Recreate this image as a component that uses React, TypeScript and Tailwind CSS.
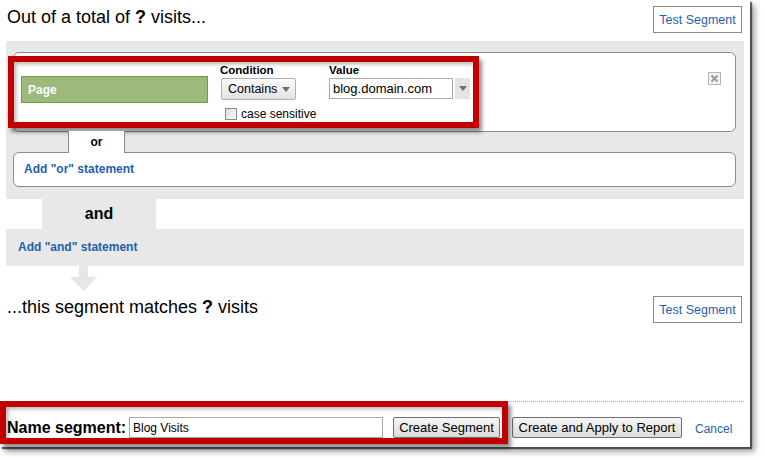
import React from 'react';

function Caret({ className = '' }: { className?: string }) {
  return (
    <svg width="8" height="5" viewBox="0 0 8 5" className={className}>
      <polygon points="0,0 8,0 4,5" fill="#707070" />
    </svg>
  );
}

function TestSegment() {
  return (
    <button className="h-[27px] w-[89px] border border-[#8a8a8a] bg-white pt-[1px] text-[12.5px] leading-none text-[#1f5fae]">
      Test Segment
    </button>
  );
}

export default function App() {
  return (
    <div className="h-[460px] w-[765px] overflow-hidden bg-white font-['Liberation_Sans',Arial,sans-serif] text-black">
      <div className="relative flex h-[447px] w-[750px] flex-col bg-white shadow-[2px_2px_1px_rgba(0,0,0,0.55),5px_5px_6px_rgba(0,0,0,0.35)]">
        {/* header */}
        <div className="flex h-[41px] items-start justify-between pl-[7px] pr-[8px] pt-[6px]">
          <div className="mt-[1px] text-[18px] leading-[21px]">
            Out of a total of <b>?</b> visits...
          </div>
          <TestSegment />
        </div>

        {/* or-group */}
        <div className="mx-[6px] h-[158px] bg-[#e8e8e8] pl-[7px] pr-[8px] pt-[11px]">
          <div className="flex h-[80px] items-start rounded-[6px] border border-[#8c8c8c] bg-white pl-[7px]">
            <div className="mt-[23px] h-[27px] w-[187px] border border-[#6e9c3e] bg-[#9db97b] pl-[6px] text-[12px] font-bold leading-[27px] text-white">
              Page
            </div>
            <div className="ml-[12px] mt-[10px] flex w-[109px] flex-col">
              <div className="text-[11.5px] font-bold leading-[14px]">Condition</div>
              <div className="ml-[1px] mt-[1px] flex h-[22px] w-[75px] items-center gap-[5px] rounded-[2px] border border-[#b0b0b0] bg-gradient-to-b from-[#fbfbfb] to-[#e2e2e2] pl-[6px] text-[12.5px]">
                Contains
                <Caret />
              </div>
              <label className="ml-[5px] mt-[7px] flex items-center gap-[4px] text-[12px] leading-[14px]">
                <span className="h-[12px] w-[12px] border border-[#8a8a8a] bg-gradient-to-br from-[#dcdcdc] to-[#fafafa]" />
                case sensitive
              </label>
            </div>
            <div className="mt-[10px] flex flex-col">
              <div className="text-[11.5px] font-bold leading-[14px]">Value</div>
              <div className="mt-[1px] flex">
                <div className="flex h-[21px] w-[124px] items-center border border-[#a8a8a8] pl-[3px] text-[13px]">
                  blog.domain.com
                </div>
                <div className="ml-[2px] flex h-[21px] w-[15px] items-center justify-center bg-[#e4e4e4]">
                  <Caret />
                </div>
              </div>
            </div>
            <svg width="13" height="13" viewBox="0 0 13 13" className="ml-auto mr-[14px] mt-[19px]">
              <rect x="0.5" y="0.5" width="12" height="12" fill="#f2f2f2" stroke="#b4b4b4" />
              <path d="M3.5 3.5 L9.5 9.5 M9.5 3.5 L3.5 9.5" stroke="#9a9a9a" strokeWidth="2" />
            </svg>
          </div>
          <div className="relative z-10 -my-[1px] ml-[55px] h-[22px] w-[57px] border-x border-[#8c8c8c] bg-white text-center text-[12px] font-bold leading-[22px]">
            or
          </div>
          <div className="h-[35px] rounded-[6px] border border-[#8c8c8c] bg-white pl-[10px] pt-[9px] text-[12px] font-bold leading-[14px] text-[#1f5fae]">
            Add "or" statement
          </div>
        </div>

        {/* and */}
        <div className="flex h-[30px]">
          <div className="ml-[42px] w-[114px] bg-[#e8e8e8] text-center text-[16px] font-bold leading-[30px]">and</div>
        </div>
        <div className="mx-[6px] h-[37px] bg-[#e8e8e8] pl-[12px] pt-[11px] text-[12px] font-bold leading-[14px] text-[#1f5fae]">
          Add "and" statement
        </div>

        <svg width="27" height="25" viewBox="0 0 27 25" className="ml-[70px]">
          <polygon points="9,0 18,0 18,11 27,11 13.5,25 0,11 9,11" fill="#e6e6e6" />
        </svg>

        <div className="mt-[5px] flex items-start justify-between pl-[7px] pr-[8px]">
          <div className="mt-[1px] text-[18px] leading-[21px]">
            ...this segment matches <b>?</b> visits
          </div>
          <TestSegment />
        </div>

        <div className="mx-[6px] mt-[78px] border-t border-dotted border-[#a8a8a8]" />

        {/* footer */}
        <div className="mt-[15px] flex h-[21px] items-center pl-[7px]">
          <div className="w-[122px] text-[16px] font-bold leading-[21px]">Name segment:</div>
          <div className="flex h-[21px] w-[254px] items-center border border-[#a8a8a8] pl-[3px] text-[12px]">Blog Visits</div>
          <button className="ml-[10px] h-[21px] w-[107px] rounded-[2px] border border-[#707070] bg-gradient-to-b from-[#f6f6f6] to-[#dcdcdc] text-[13px] leading-none">
            Create Segment
          </button>
          <button className="ml-[12px] h-[21px] w-[170px] rounded-[2px] border border-[#707070] bg-gradient-to-b from-[#f6f6f6] to-[#dcdcdc] text-[13px] leading-none">
            Create and Apply to Report
          </button>
          <span className="ml-[13px] pt-[2px] text-[12px] text-[#1f63b5]">Cancel</span>
        </div>

        {/* annotation frames */}
        <div className="pointer-events-none absolute left-[8px] top-[56px] h-[72px] w-[471px] border-[6px] border-[#c00000] shadow-[3px_4px_4px_rgba(0,0,0,0.45),inset_2px_2px_4px_rgba(0,0,0,0.3)]" />
        <div className="pointer-events-none absolute left-0 top-[401px] h-[43px] w-[508px] border-[6px] border-[#c00000] shadow-[3px_4px_4px_rgba(0,0,0,0.45),inset_2px_2px_4px_rgba(0,0,0,0.3)]" />
      </div>
    </div>
  );
}
